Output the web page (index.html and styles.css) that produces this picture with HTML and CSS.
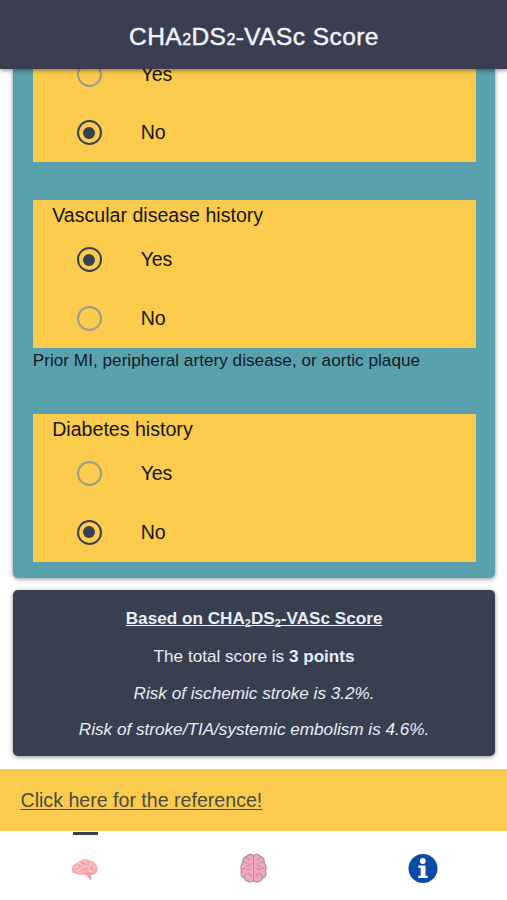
FILE: index.html
```html
<!DOCTYPE html>
<html lang="en">
<head>
<meta charset="utf-8">
<title>CHA₂DS₂-VASc Score</title>
<link rel="stylesheet" href="styles.css">
</head>
<body>
<div class="app">
  <header class="header"><h1 class="title">CHA<small>2</small>DS<small>2</small>-VASc Score</h1></header>
  <main class="content">
    <section class="form-card">
      <div class="question question-cut">
        <div class="option"><span class="radio"></span><span>Yes</span></div>
        <div class="option"><span class="radio checked"></span><span>No</span></div>
      </div>
      <div class="question">
        <h2 class="label">Vascular disease history</h2>
        <div class="option"><span class="radio checked"></span><span>Yes</span></div>
        <div class="option"><span class="radio"></span><span>No</span></div>
      </div>
      <p class="note">Prior MI, peripheral artery disease, or aortic plaque</p>
      <div class="question">
        <h2 class="label">Diabetes history</h2>
        <div class="option"><span class="radio"></span><span>Yes</span></div>
        <div class="option"><span class="radio checked"></span><span>No</span></div>
      </div>
    </section>
    <section class="result">
      <p class="result-title">Based on CHA<sub>2</sub>DS<sub>2</sub>-VASc Score</p>
      <p class="total">The total score is <b>3 points</b></p>
      <p class="risk">Risk of ischemic stroke is 3.2%.</p>
      <p class="risk">Risk of stroke/TIA/systemic embolism is 4.6%.</p>
    </section>
  </main>
  <div class="reference"><a class="link">Click here for the reference!</a></div>
  <nav class="tabs">
    <div class="tab active">
      <svg width="30" height="24" viewBox="0 0 30 26">
        <path fill="#f6adb0" d="M1 14C0 10 3 6 7 5C10 1 17 0 21 3C26 4 29 9 28.500 13C29 16 26 18 23 18L21 19L22 23L20 23.500C19 21 16 19 14 18C11 19 7 18 6 17C3 17 1 16 1 14Z"/>
        <path fill="none" stroke="#fbdcdc" stroke-width="1" stroke-linecap="round" d="M4 12Q5 8 8 9M8 6Q11 5 11 8M13 4Q16 3 17 6M20 5Q23 6 21 8M24 8Q27 10 25 12M5 14Q9 14 10 11M12 10Q15 11 15 8M17 9Q20 9 20 11M9 16Q13 15 14 13M17 13Q20 15 24 14"/>
        <path fill="none" stroke="#ef8f93" stroke-width="1" stroke-linecap="round" d="M2 11Q3 14 7 12M9 8L9 10M12 6L15 5M12 14Q16 10 18 12M22 10L23 12M15 17Q20 18 24 17M20 19L21.500 23"/>
      </svg>
    </div>
    <div class="tab">
      <svg width="27" height="31" viewBox="0 0 28 32">
        <path fill="#f4a5c2" stroke="#a0999d" stroke-width="1.300" d="M14 3C12 .500 8 1 7 3.500C4 4 2.500 7 3 10C1 12 .500 16 1.500 18C.500 22 2 25 4.500 26C6 30 11 31 14 28.500C17 31 22 30 23.500 26C26 25 27.500 22 26.500 18C27.500 16 27 12 25 10C25.500 7 24 4 21 3.500C20 1 16 .500 14 3Z"/>
        <path fill="none" stroke="#ad8b99" stroke-width="1" stroke-linecap="round" d="M14 3V29M7 4Q7 7 10 7M3 10Q6 8 7 11M11 11Q10 14 7 14M2 17Q5 14 7 17Q10 18 11 16M5 25Q5 21 9 21Q11 21 11 24M21 4Q21 7 18 7M25 10Q22 8 21 11M17 11Q18 14 21 14M26 17Q23 14 21 17Q18 18 17 16M23 25Q23 21 19 21Q17 21 17 24"/>
      </svg>
    </div>
    <div class="tab">
      <svg width="30" height="30" viewBox="0 0 30 30">
        <circle cx="15" cy="15.500" r="14.500" fill="#0b4aa6"/>
        <circle cx="14.800" cy="8" r="2.900" fill="#fff"/>
        <path fill="#fff" d="M10.300 12.500H17.500V22.700H19.700V25H10.300V22.700H12.700V14.700H10.300Z"/>
      </svg>
    </div>
  </nav>
</div>
</body>
</html>
```
FILE: styles.css
```css
* { box-sizing: border-box; }
body { margin: 0; background: #fff; font-family: "Liberation Sans", Arial, sans-serif; font-size: 19.6px; color: #17160f; }
h1, h2, p { margin: 0; font-weight: 400; }
.app { display: flex; flex-direction: column; height: 900px; overflow: hidden; }
.header { flex: none; height: 69px; padding-top: 22px; background: #3a3e50; text-align: center; box-shadow: 0 1px 5px rgba(0,0,0,.5); z-index: 1; }
.title { padding-left: 1px; font-size: 24.5px; line-height: 30px; letter-spacing: .43px; color: #f0f4ff; -webkit-text-stroke: .45px #f0f4ff; }
.title small { font-size: 16px; }
.content { flex: none; height: 699.500px; padding: 0 12px 0 13.200px; overflow: hidden; }
.form-card { height: 509px; padding: 0 19px 0 19.500px; background: #5aa1ae; border-radius: 0 0 5px 5px; box-shadow: 0 1px 4px rgba(0,0,0,.45); }
.question { height: 148px; background: #facb4d; }
.question-cut { height: 93.300px; margin-bottom: 38px; padding-top: 5.200px; overflow: hidden; }
.question-cut .option:first-child { margin-top: -29px; }
.label { height: 30.300px; padding: 3px 0 0 19.500px; font-size: 19.6px; line-height: 24px; }
.option { display: flex; align-items: center; height: 58.500px; padding-left: 44px; gap: 39px; letter-spacing: -.2px; }
.radio { display: grid; place-items: center; width: 25px; height: 25px; border: 2.500px solid #9d9b8c; border-radius: 50%; }
.checked { border-color: #394050; }
.checked::after { content: ""; width: 12.500px; height: 12.500px; border-radius: 50%; background: #394050; }
.note { height: 65.700px; padding-top: 2px; font-size: 17.15px; line-height: 21px; letter-spacing: .03px; color: #111b1e; white-space: nowrap; }
.result { height: 166px; margin-top: 12px; padding-top: 17px; border-radius: 5px; background: #384050; color: #e8edf7; font-size: 17.15px; line-height: 22px; text-align: center; box-shadow: 0 1px 4px rgba(0,0,0,.45); }
.result-title { font-weight: 700; text-decoration: underline; text-decoration-thickness: 1px; }
.result-title sub { font-size: 11px; line-height: 0; vertical-align: -3px; }
.total { margin-top: 16px; }
.risk { margin-top: 14.500px; font-style: italic; }
.reference { flex: none; height: 62.500px; padding: 19px 20.500px 0; background: #facb4d; line-height: 24px; }
.link { color: #4c4b42; text-decoration: underline; text-decoration-thickness: 1px; text-underline-offset: 2px; }
.tabs { display: grid; grid-template-columns: repeat(3, 1fr); flex: 1; }
.tab { display: flex; flex-direction: column; align-items: center; padding-top: 22px; }
.tab.active { padding-top: 1px; }
.active::before { content: ""; width: 25px; height: 2.500px; margin: 0 0 23.500px 1px; background: #394050; }
```
